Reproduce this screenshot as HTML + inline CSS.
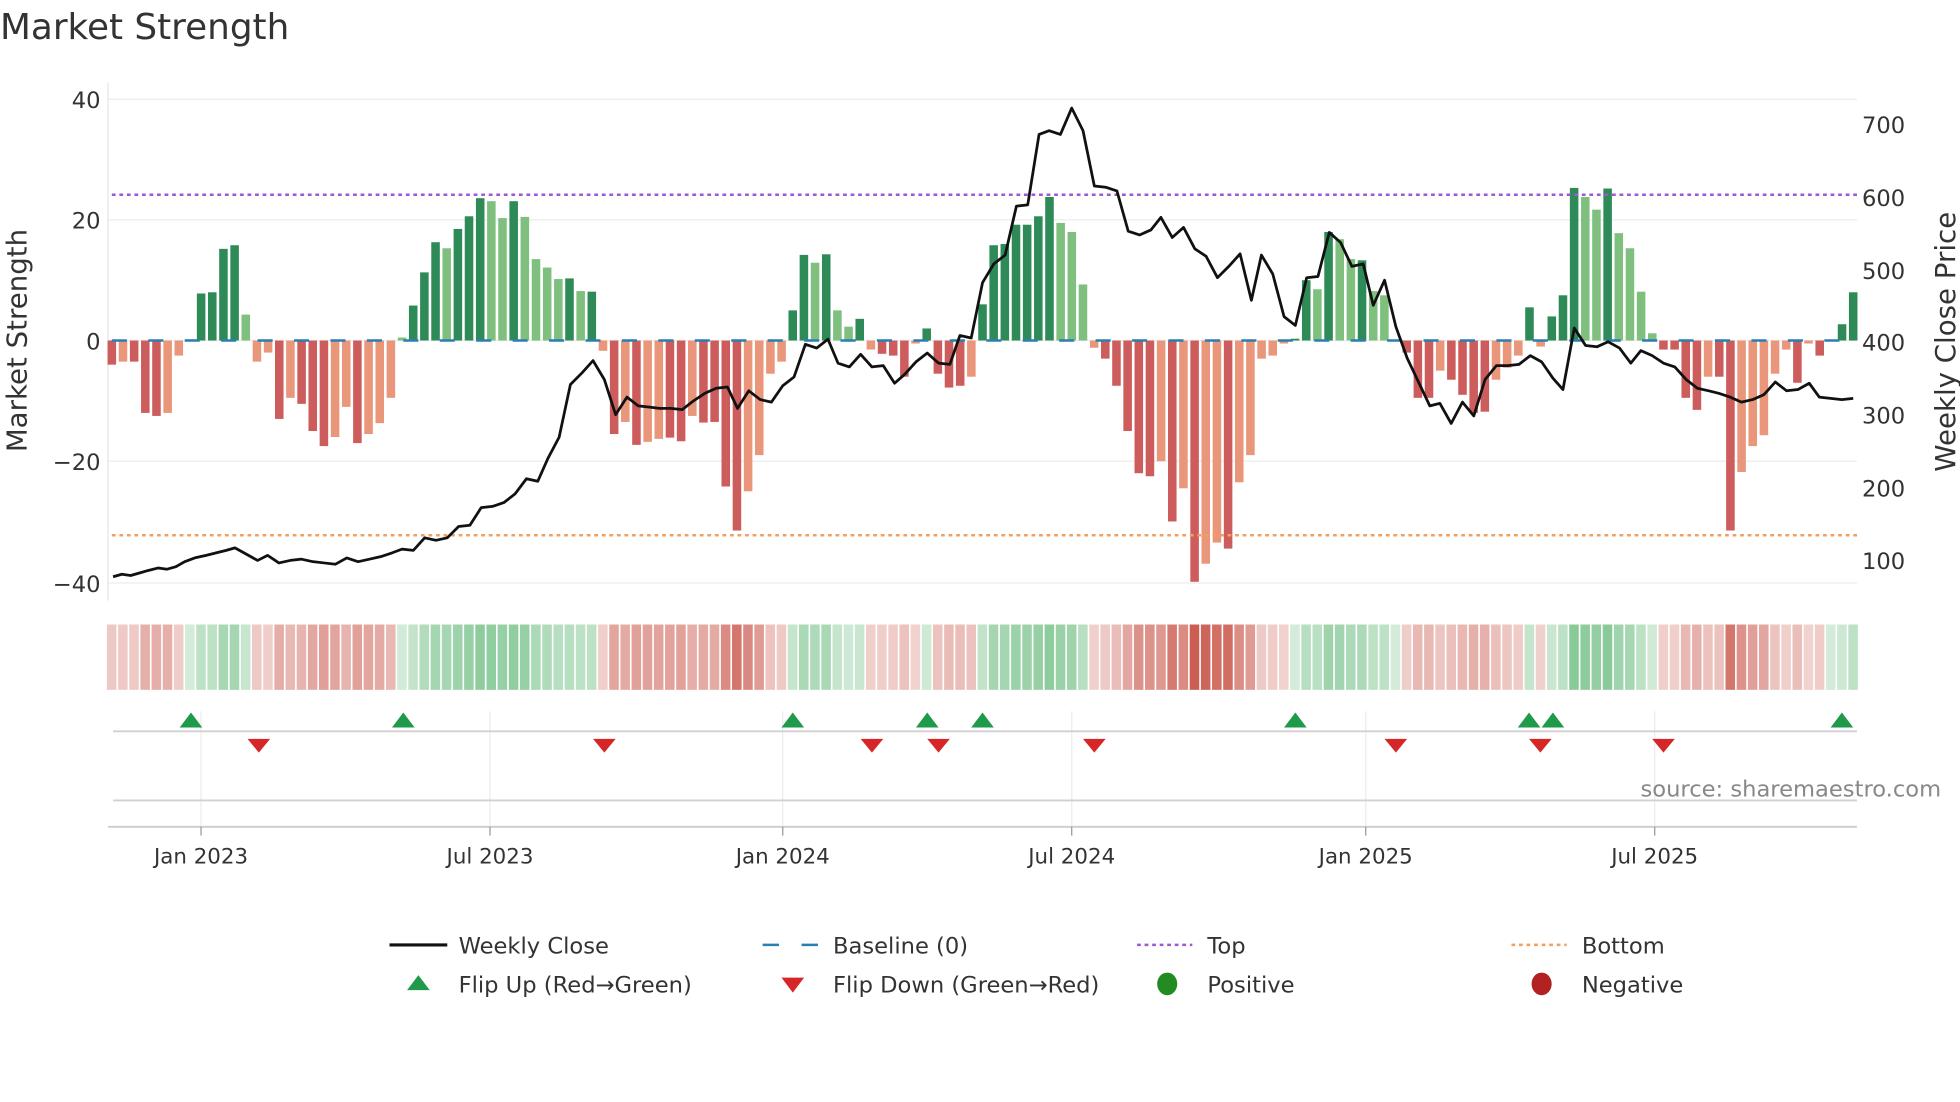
<!DOCTYPE html>
<html><head><meta charset="utf-8"><style>
html,body{margin:0;padding:0;background:#fff;}
svg{display:block;}
text{font-family:"DejaVu Sans","Liberation Sans",sans-serif;fill:#333;}
</style></head><body>
<svg id="s" width="1960" height="1102" viewBox="0 0 1560 877" preserveAspectRatio="none" xmlns="http://www.w3.org/2000/svg">
<text x="0" y="31" font-size="28.5">Market Strength</text>
<g stroke="#ececec" stroke-width="1">
<line x1="86" x2="1478" y1="79" y2="79"/><line x1="86" x2="1478" y1="175" y2="175"/><line x1="86" x2="1478" y1="271" y2="271"/><line x1="86" x2="1478" y1="367" y2="367"/><line x1="86" x2="1478" y1="464" y2="464"/>
</g>
<line x1="86" x2="86" y1="66" y2="478" stroke="#e6e6e6"/>
<g font-size="18" text-anchor="end">
<text x="80" y="86">40</text><text x="80" y="182">20</text><text x="80" y="278">0</text><text x="80" y="374">−20</text><text x="80" y="471">−40</text>
</g>
<g font-size="18">
<text x="1482" y="106">700</text><text x="1482" y="164">600</text><text x="1482" y="222">500</text><text x="1482" y="279">400</text><text x="1482" y="337">300</text><text x="1482" y="395">200</text><text x="1482" y="453">100</text>
</g>
<text transform="translate(21,271) rotate(-90)" font-size="22" text-anchor="middle">Market Strength</text>
<text transform="translate(1556,272) rotate(-90)" font-size="22" text-anchor="middle">Weekly Close Price</text>
<g id="bars"></g>
<line x1="89" x2="1478" y1="271" y2="271" stroke="#2a7fb0" stroke-width="2" stroke-dasharray="12 17"/>
<line x1="89" x2="1478" y1="155" y2="155" stroke="#9b59d6" stroke-width="2" stroke-dasharray="3 3"/>
<line x1="89" x2="1478" y1="426" y2="426" stroke="#f0a060" stroke-width="2" stroke-dasharray="3 3"/>
<polyline id="pl" fill="none" stroke="#111" stroke-width="2.2" stroke-linejoin="round"/>
<g id="heat"></g>
<g stroke="#ececec"><line x1="160" x2="160" y1="566" y2="658"/><line x1="390" x2="390" y1="566" y2="658"/><line x1="623" x2="623" y1="566" y2="658"/><line x1="853" x2="853" y1="566" y2="658"/><line x1="1087" x2="1087" y1="566" y2="658"/><line x1="1317" x2="1317" y1="566" y2="658"/></g>
<line x1="90" x2="1478" y1="582" y2="582" stroke="#d0d0d0" stroke-width="1.5"/>
<line x1="90" x2="1478" y1="637" y2="637" stroke="#d0d0d0" stroke-width="1.5"/>
<line x1="86" x2="1478" y1="658" y2="658" stroke="#ccc" stroke-width="1.5"/>
<g stroke="#999"><line x1="160" x2="160" y1="658" y2="665"/><line x1="390" x2="390" y1="658" y2="665"/><line x1="623" x2="623" y1="658" y2="665"/><line x1="853" x2="853" y1="658" y2="665"/><line x1="1087" x2="1087" y1="658" y2="665"/><line x1="1317" x2="1317" y1="658" y2="665"/></g>
<g id="mk"></g>
<text x="1545" y="634" font-size="18" text-anchor="end" style="fill:#888">source: sharemaestro.com</text>
<g font-size="17" text-anchor="middle">
<text x="160" y="687">Jan 2023</text><text x="390" y="687">Jul 2023</text><text x="623" y="687">Jan 2024</text><text x="853" y="687">Jul 2024</text><text x="1087" y="687">Jan 2025</text><text x="1317" y="687">Jul 2025</text>
</g>
<g font-size="18">
<line x1="310" x2="356" y1="752" y2="752" stroke="#111" stroke-width="2.5"/><text x="365" y="759">Weekly Close</text>
<line x1="607" x2="651" y1="752" y2="752" stroke="#2a7fb0" stroke-width="2" stroke-dasharray="13 18"/><text x="663" y="759">Baseline (0)</text>
<line x1="905" x2="949" y1="752" y2="752" stroke="#9b59d6" stroke-width="2" stroke-dasharray="3 3"/><text x="961" y="759">Top</text>
<line x1="1203" x2="1247" y1="752" y2="752" stroke="#f0a060" stroke-width="2" stroke-dasharray="3 3"/><text x="1259" y="759">Bottom</text>
<polygon points="324,788 342,788 333,776" fill="#1f9a4a"/><text x="365" y="790">Flip Up (Red→Green)</text>
<polygon points="622,778 640,778 631,790" fill="#d62728"/><text x="663" y="790">Flip Down (Green→Red)</text>
<ellipse cx="929" cy="783" rx="8" ry="9" fill="#228b22"/><text x="961" y="790">Positive</text>
<ellipse cx="1227" cy="783" rx="8" ry="9" fill="#b22222"/><text x="1259" y="790">Negative</text>
</g>
</svg>
<script>
var V=[-4,-3.5,-3.5,-12,-12.5,-12,-2.5,0.2,7.8,8,15.2,15.8,4.3,-3.5,-2,-13,-9.5,-10.5,-15,-17.5,-16,-11,-17,-15.5,-13.7,-9.5,0.5,5.8,11.3,16.3,15.3,18.5,20.6,23.6,23.1,20.3,23.1,20.5,13.5,12.1,10.2,10.3,8.2,8.1,-1.7,-15.5,-13.5,-17.3,-16.8,-16.3,-16.1,-16.7,-12.5,-13.6,-13.5,-24.2,-31.5,-25,-19,-5.5,-3.5,5,14.2,12.9,14.3,5,2.3,3.6,-1.5,-2.2,-2.5,-6,-0.5,2,-5.5,-7.8,-7.5,-6,6,15.8,16,19.2,19.2,20.6,23.8,19.5,18,9.3,-1.2,-3,-7.5,-15,-22,-22.5,-20,-30,-24.5,-40,-37,-33.5,-34.5,-23.5,-19,-3,-2.5,-0.5,0.3,10,8.5,18,16.8,13.5,13.3,8.2,7.5,0.1,-2,-9.5,-9.5,-5,-6.5,-9,-12,-11.8,-6.5,-4.5,-2.5,5.5,-1,4,7.5,25.3,23.8,21.7,25.2,17.8,15.3,8.1,1.2,-1.5,-1.5,-9.5,-11.5,-6,-6,-31.5,-21.8,-17.5,-15.7,-5.5,-1.5,-7,-0.5,-2.5,0.1,2.7,8];
var ns="http://www.w3.org/2000/svg",b=document.getElementById('bars'),h=document.getElementById('heat');
var n=V.length,step=(1475-89)/(n-1);
function el(t,a,p){var e=document.createElementNS(ns,t);for(var k in a)e.setAttribute(k,a[k]);p.appendChild(e);return e;}
for(var i=0;i<n;i++){var v=V[i],x=89+i*step,dark=true;
if(i>0){dark=Math.abs(v)>=Math.abs(V[i-1])-0.3;}
var c=v>=0?(dark?'#2e8b57':'#7fc07f'):(dark?'#cd5c5c':'#e9967a');
var y0=271,y1=271-v*4.8;
if(Math.abs(v)>0.15)el('rect',{x:x-3.4,y:Math.min(y0,y1),width:6.8,height:Math.abs(y1-y0),fill:c},b);
var a=0.22+0.6*Math.min(1,Math.abs(v)/40);
el('rect',{x:x-3.9,y:497,width:7.6,height:52,fill:v>=0?'#3aa655':'#c0392b','fill-opacity':a},h);}
var P=[[90,459],[97,457],[104,458],[111,456],[118,454],[126,452],[133,453],[140,451],[147,447],[155,444],[164,442],[172,440],[180,438],[187,436],[196,441],[205,446],[213,442],[222,448],[231,446],[240,445],[249,447],[258,448],[267,449],[276,444],[285,447],[294,445],[303,443],[312,440],[320,437],[329,438],[338,428],[347,430],[356,428],[365,419],[374,418],[383,404],[392,403],[401,400],[410,393],[419,381],[428,383],[436,365],[445,348],[454,306],[463,297],[472,287],[481,302],[490,330],[499,316],[508,323],[517,324],[525,325],[534,325],[543,326],[552,319],[561,313],[570,309],[579,308],[587,325],[596,311],[605,318],[614,320],[623,307],[632,300],[641,274],[650,277],[659,270],[667,289],[676,292],[685,282],[694,292],[703,291],[712,305],[720,298],[729,288],[738,281],[747,289],[756,290],[764,267],[773,269],[782,225],[791,210],[800,203],[809,164],[818,163],[827,107],[835,104],[844,107],[853,86],[862,104],[871,148],[880,149],[889,152],[898,184],[907,187],[916,183],[924,173],[933,189],[942,181],[951,198],[960,204],[969,221],[978,212],[987,202],[996,239],[1004,203],[1013,218],[1022,252],[1031,259],[1040,221],[1049,220],[1058,185],[1067,193],[1076,212],[1085,210],[1093,243],[1102,223],[1111,260],[1120,285],[1129,304],[1138,323],[1146,321],[1155,337],[1164,320],[1173,331],[1182,302],[1191,291],[1200,291],[1209,290],[1218,283],[1227,288],[1236,301],[1244,310],[1253,261],[1262,275],[1271,276],[1280,272],[1289,277],[1298,289],[1306,279],[1315,283],[1324,289],[1333,292],[1342,302],[1351,309],[1360,311],[1368,313],[1377,316],[1386,320],[1395,318],[1404,314],[1413,304],[1422,311],[1431,310],[1440,305],[1448,316],[1457,317],[1466,318],[1475,317]];
document.getElementById('pl').setAttribute('points',P.map(function(p){return p.join(',')}).join(' '));
var mk=document.getElementById('mk');
[152,321,631,738,782,1031,1217,1236,1466].forEach(function(x){el('polygon',{points:(x-9)+',579 '+(x+9)+',579 '+x+',567',fill:'#1f9a4a'},mk);});
[206,481,694,747,871,1111,1226,1324].forEach(function(x){el('polygon',{points:(x-9)+',588 '+(x+9)+',588 '+x+',599',fill:'#d62728'},mk);});
</script>
</body></html>
